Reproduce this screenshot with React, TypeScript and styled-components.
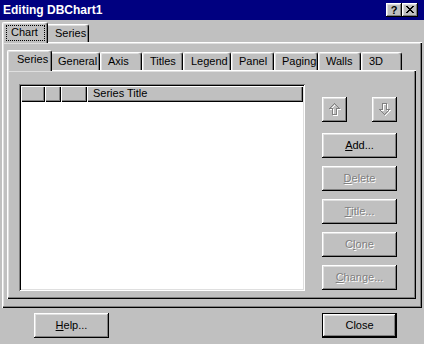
import React from "react";
import styled, { createGlobalStyle, css } from "styled-components";

const GlobalStyle = createGlobalStyle`
  html, body { margin: 0; padding: 0; background: #c0c0c0; }
  body { font-family: "Liberation Sans", Arial, sans-serif; font-size: 11px; color: #000; }
  * { box-sizing: border-box; }
`;

const raised = css`
  box-shadow: inset -1px -1px #000, inset 1px 1px #fff, inset -2px -2px #808080, inset 2px 2px #dfdfdf;
`;

const Window = styled.div`
  width: 424px;
  height: 344px;
  background: #c0c0c0;
  display: flex;
  flex-direction: column;
  overflow: hidden;
`;

const TitleBar = styled.div`
  height: 20px;
  background: #000080;
  display: flex;
  align-items: center;
  padding: 0 6px 0 3px;
`;

const Title = styled.div`
  flex: 1;
  color: #fff;
  font-weight: bold;
  font-size: 12px;
  line-height: 14px;
`;

const CaptionButton = styled.div`
  width: 16px;
  height: 14px;
  background: #c0c0c0;
  ${raised};
  display: flex;
  align-items: center;
  justify-content: center;
  font-weight: bold;
  font-size: 11px;
  line-height: 12px;
  padding-bottom: 1px;
`;

const TabStrip = styled.div<{ $pad: number }>`
  height: 20px;
  display: flex;
  align-items: flex-end;
  padding-left: ${(p) => p.$pad}px;
`;

const Tab = styled.div<{ $active?: boolean; $w: number; $pad?: number }>`
  position: relative;
  width: ${(p) => p.$w}px;
  height: 18px;
  padding-left: ${(p) => p.$pad ?? 7}px;
  line-height: 16px;
  white-space: nowrap;
  background: #c0c0c0;
  border-top: 1px solid #fff;
  border-left: 1px solid #fff;
  border-right: 1px solid #000;
  border-radius: 2px 3px 0 0;
  box-shadow: inset -1px 0 #808080, inset 1px 1px #dfdfdf;
  ${(p) =>
    p.$active &&
    css`
      z-index: 1;
      width: ${p.$w + 4}px;
      height: 21px;
      margin: 0 -2px -1px;
      padding-left: ${(p.$pad ?? 7) + 2}px;
      box-shadow: inset -1px 0 #808080, inset 1px 1px #dfdfdf;
    `}
`;

const FocusLabel = styled.span`
  display: inline-block;
  width: 39px;
  height: 16px;
  margin-top: 2px;
  padding-left: 4px;
  border: 1px dotted #000;
  line-height: 13px;
`;

const OuterPanel = styled.div`
  margin-left: 2px;
  width: 420px;
  height: 266px;
  padding: 8px 6px 9px 5px;
  box-shadow: inset 1px 1px #fff, inset -1px -1px #000, inset -2px -2px #808080, inset 2px 2px #dfdfdf;
  display: flex;
  flex-direction: column;
`;

const InnerPanel = styled.div`
  width: 409px;
  height: 229px;
  padding: 14px 0 0 12px;
  box-shadow: inset 1px 1px #fff, inset -1px -1px #000, inset -2px -2px #808080, inset 2px 2px #dfdfdf;
  display: flex;
  align-items: flex-start;
`;

const ListBox = styled.div`
  width: 286px;
  height: 207px;
  padding: 2px;
  background: #fff;
  box-shadow: inset 1px 1px #808080, inset -1px -1px #fff, inset 2px 2px #000, inset -2px -2px #dfdfdf;
`;

const Header = styled.div`
  display: flex;
  height: 16px;
`;

const HeaderCell = styled.div<{ $w?: number }>`
  ${(p) => (p.$w ? `width: ${p.$w}px;` : "flex: 1;")}
  height: 16px;
  background: #c0c0c0;
  padding-left: 6px;
  line-height: 15px;
  box-shadow: inset 1px 1px #fff, inset -1px -1px #000, inset -2px -2px #808080;
`;

const SideColumn = styled.div`
  margin-left: 17px;
  width: 75px;
  padding-top: 13px;
  display: flex;
  flex-direction: column;
  gap: 8px;
`;

const ArrowRow = styled.div`
  display: flex;
  justify-content: space-between;
  margin-bottom: 3px;
`;

const ArrowButton = styled.div`
  width: 25px;
  height: 25px;
  background: #c0c0c0;
  ${raised};
  display: flex;
  align-items: center;
  justify-content: center;
`;

const Button = styled.div<{ $disabled?: boolean; $default?: boolean }>`
  width: 75px;
  height: 25px;
  background: #c0c0c0;
  ${raised};
  display: flex;
  align-items: center;
  justify-content: center;
  line-height: 13px;
  color: ${(p) => (p.$disabled ? "#808080" : "#000")};
  text-shadow: ${(p) => (p.$disabled ? "1px 1px 0 #fff" : "none")};
  ${(p) =>
    p.$default &&
    css`
      border: 1px solid #000;
      box-shadow: inset -1px -1px #000, inset 1px 1px #fff, inset -2px -2px #808080, inset 2px 2px #dfdfdf;
    `}
`;

const Footer = styled.div`
  display: flex;
  justify-content: space-between;
  padding: 0 27px 0 34px;
  margin-top: 5px;
`;

const innerTabs: [string, number][] = [
  ["Series", 41],
  ["General", 50],
  ["Axis", 42],
  ["Titles", 41],
  ["Legend", 48],
  ["Panel", 43],
  ["Paging", 44],
  ["Walls", 43],
  ["3D", 41],
];

const UpArrow = () => (
  <svg width="14" height="15" viewBox="0 0 14 15" shapeRendering="crispEdges">
    <path d="M7.5 2.5 L12.5 7.5 L9.5 7.5 L9.5 13.5 L5.5 13.5 L5.5 7.5 L2.5 7.5 Z" fill="none" stroke="#fff" />
    <path d="M6.5 1.5 L11.5 6.5 L8.5 6.5 L8.5 12.5 L4.5 12.5 L4.5 6.5 L1.5 6.5 Z" fill="none" stroke="#808080" />
  </svg>
);

const DownArrow = () => (
  <svg width="14" height="15" viewBox="0 0 14 15" shapeRendering="crispEdges">
    <path d="M5.5 2.5 L9.5 2.5 L9.5 8.5 L12.5 8.5 L7.5 13.5 L2.5 8.5 L5.5 8.5 Z" fill="none" stroke="#fff" />
    <path d="M4.5 1.5 L8.5 1.5 L8.5 7.5 L11.5 7.5 L6.5 12.5 L1.5 7.5 L4.5 7.5 Z" fill="none" stroke="#808080" />
  </svg>
);

const CloseGlyph = () => (
  <svg width="8" height="7" viewBox="0 0 8 7" shapeRendering="crispEdges">
    <path d="M0 0h2v1h-2zM6 0h2v1h-2zM1 1h2v1h-2zM5 1h2v1h-2zM2 2h4v1h-4zM3 3h2v1h-2zM2 4h4v1h-4zM1 5h2v1h-2zM5 5h2v1h-2zM0 6h2v1h-2zM6 6h2v1h-2z" fill="#000" />
  </svg>
);

export default function App() {
  return (
    <>
      <GlobalStyle />
      <Window>
        <TitleBar>
          <Title>Editing DBChart1</Title>
          <CaptionButton>?</CaptionButton>
          <CaptionButton>
            <CloseGlyph />
          </CaptionButton>
        </TitleBar>
        <TabStrip $pad={4} style={{ marginTop: 2 }}>
          <Tab $active $w={42} $pad={1}>
            <FocusLabel>Chart</FocusLabel>
          </Tab>
          <Tab $w={43} $pad={8}>
            Series
          </Tab>
        </TabStrip>
        <OuterPanel>
          <TabStrip $pad={2}>
            {innerTabs.map(([label, w], i) => (
              <Tab key={label} $w={w} $active={i === 0}>
                {label}
              </Tab>
            ))}
          </TabStrip>
          <InnerPanel>
            <ListBox>
              <Header>
                <HeaderCell $w={24} />
                <HeaderCell $w={16} />
                <HeaderCell $w={26} />
                <HeaderCell>Series Title</HeaderCell>
              </Header>
            </ListBox>
            <SideColumn>
              <ArrowRow>
                <ArrowButton>
                  <UpArrow />
                </ArrowButton>
                <ArrowButton>
                  <DownArrow />
                </ArrowButton>
              </ArrowRow>
              <Button>
                <u>A</u>dd...
              </Button>
              <Button $disabled>
                <u>D</u>elete
              </Button>
              <Button $disabled>
                <u>T</u>itle...
              </Button>
              <Button $disabled>
                C<u>l</u>one
              </Button>
              <Button $disabled>
                <u>C</u>hange...
              </Button>
            </SideColumn>
          </InnerPanel>
        </OuterPanel>
        <Footer>
          <Button>
            <u>H</u>elp...
          </Button>
          <Button $default>Close</Button>
        </Footer>
      </Window>
    </>
  );
}
